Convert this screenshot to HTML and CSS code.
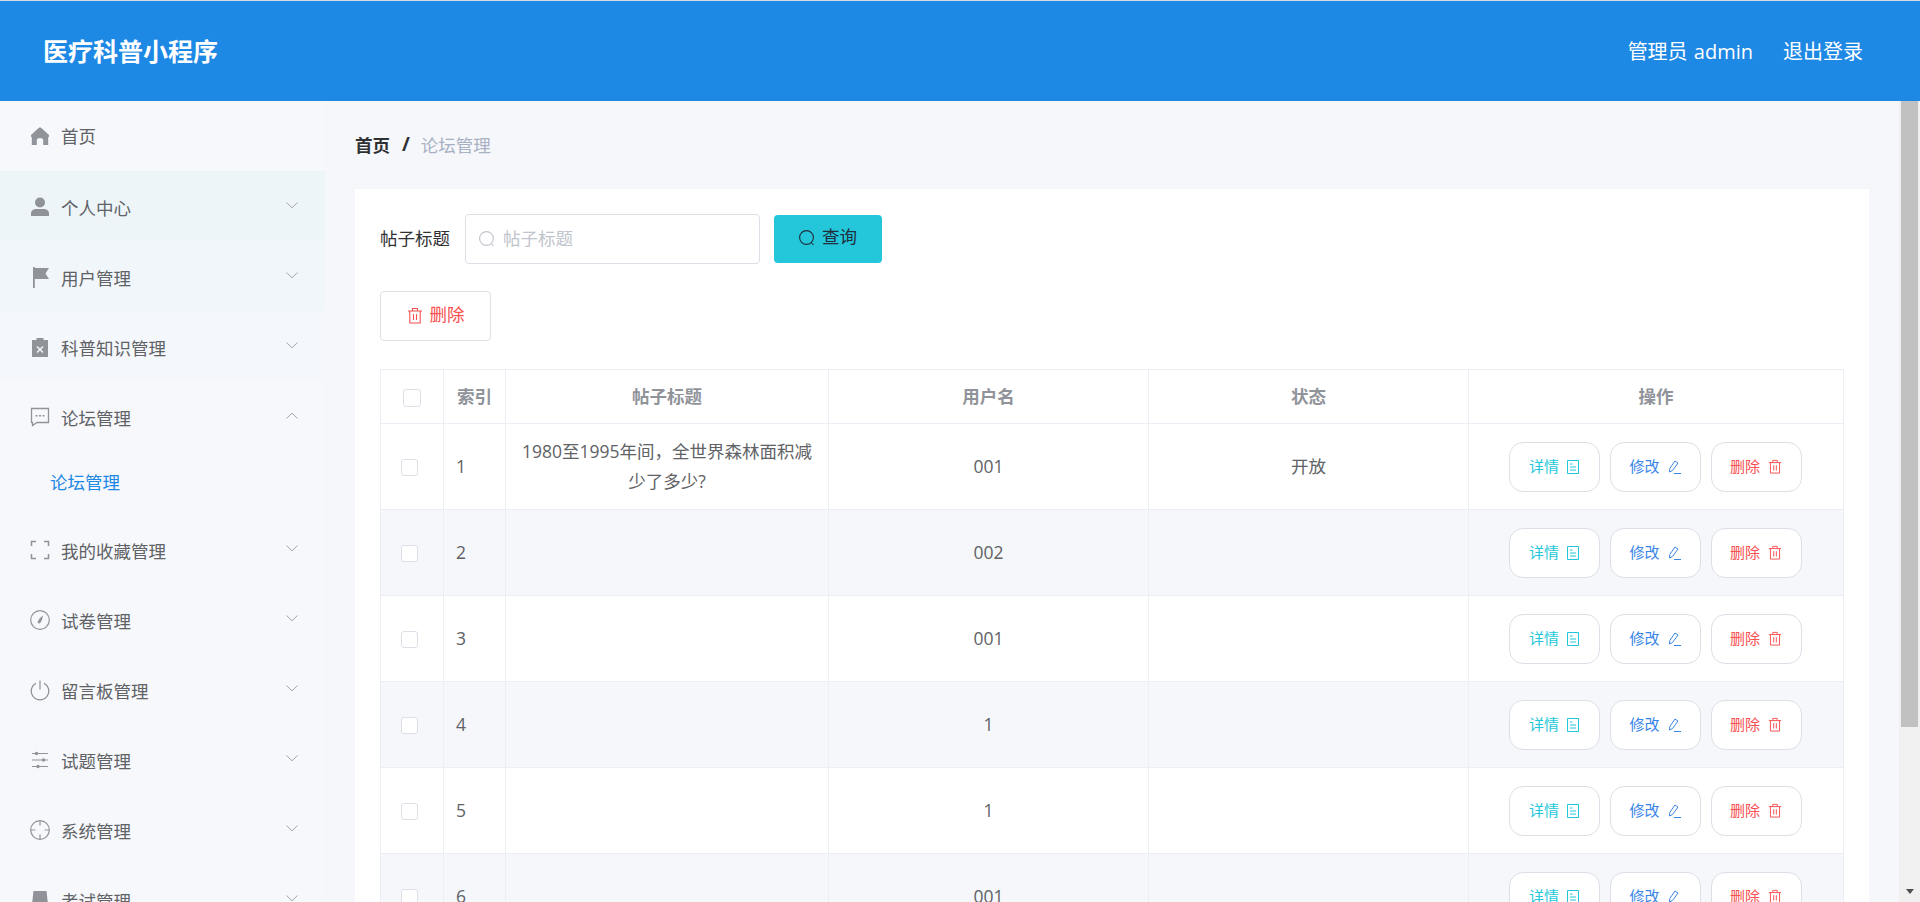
FILE: index.html
```html
<!DOCTYPE html>
<html lang="zh-CN">
  <head>
    <meta charset="UTF-8" />
    <title>医疗科普小程序</title>
    <link rel="stylesheet" href="styles.css">
  </head>
  <body>
    <svg class="sprites" width="0" height="0">
      <symbol id="i-search" viewBox="0 0 16 16"><circle cx="7.5" cy="7.5" r="6.9" fill="none" stroke="currentColor" stroke-width="1.1"/><path d="M12.300 12.500l2.200 2.500" fill="none" stroke="currentColor" stroke-width="1.1"/></symbol>
      <symbol id="i-trash" viewBox="0 0 16 16"><path d="M1 3.500h14M5.500 3.500V1h5v2.500M2.800 3.500v12h10.400v-12M6.500 6.500v6M9.500 6.500v6" fill="none" stroke="currentColor" stroke-width="1.1"/></symbol>
      <symbol id="i-doc" viewBox="0 0 12 14"><path d="M.5.500h11v13H.5zM3 4h2.500M3 7h6M3 10h6" fill="none" stroke="currentColor" stroke-width="1"/></symbol>
      <symbol id="i-edit" viewBox="0 0 13 14"><path d="M7 1l3 2-5.500 7.500-3 1.500.3-3.500zM6 13.500h7" fill="none" stroke="currentColor" stroke-width="1"/></symbol>
      <symbol id="i-chev" viewBox="0 0 12 7"><path d="M.5.500L6 5.800 11.500.5" fill="none" stroke="currentColor" stroke-width="1"/></symbol>
    </svg>

    <header class="topbar">
      <div class="brand">医疗科普小程序</div>
      <div class="topbar-right">
        <span class="user-name">管理员 admin</span>
        <span>退出登录</span>
      </div>
    </header>

    <div class="layout">
      <nav class="sidebar">
        <div class="menu-item no-arrow">
          <svg class="menu-icon" viewBox="0 0 20 20"><path d="M10 1.500c-1 0-1.500.7-2.200 1.300L1 9v1.500c0 .5.300.8.800.8V19h5v-5c0-1 1-2 3.200-2s3.200 1 3.200 2v5h5v-7.700c.5 0 .8-.3.8-.8V9l-6.800-6.200c-.7-.6-1.200-1.300-2.200-1.300z" fill="currentColor"/></svg>
          <span class="menu-text">首页</span>
        </div>
        <div class="menu-item hover-a">
          <svg class="menu-icon" viewBox="0 0 20 20"><circle cx="10" cy="5.500" r="5" fill="currentColor"/><path d="M1 19v-2.500c0-3 2.500-4.500 5-4.500h8c2.500 0 5 1.500 5 4.500V19z" fill="currentColor"/></svg>
          <span class="menu-text">个人中心</span>
          <svg class="chev"><use href="#i-chev"/></svg>
        </div>
        <div class="menu-item hover-b">
          <svg class="menu-icon" viewBox="0 0 20 20"><path d="M3 0h1.800v21H3zM4.800 1H19l-3.500 5.500L19 12H4.800z" fill="currentColor"/></svg>
          <span class="menu-text">用户管理</span>
          <svg class="chev"><use href="#i-chev"/></svg>
        </div>
        <div class="menu-item hover-c">
          <svg class="menu-icon" viewBox="0 0 20 20"><path fill-rule="evenodd" d="M2 3h4.500V1h7v2H18v17H2zM7.500 9l-1 1 2.500 2.500L6.500 15l1 1 2.500-2.500 2.500 2.500 1-1-2.500-2.500 2.500-2.500-1-1-2.500 2.500z" fill="currentColor"/></svg>
          <span class="menu-text">科普知识管理</span>
          <svg class="chev"><use href="#i-chev"/></svg>
        </div>
        <div class="menu-item">
          <svg class="menu-icon" viewBox="0 0 20 20"><path d="M1.500 1.500h17v14H7L2.500 18.500v-3h-1z" fill="none" stroke="currentColor" stroke-width="1.300"/><path d="M5.500 8h2v1.600h-2zM9 8h2v1.600H9zM12.500 8h2v1.600h-2z" fill="currentColor"/></svg>
          <span class="menu-text">论坛管理</span>
          <svg class="chev open"><use href="#i-chev"/></svg>
        </div>
        <div class="submenu-item">论坛管理</div>
        <div class="menu-item">
          <svg class="menu-icon" viewBox="0 0 20 20"><path d="M1.500 6V1.500H6M14 1.500h4.500V6M18.500 14v4.500H14M6 18.500H1.500V14" fill="none" stroke="currentColor" stroke-width="1.500"/></svg>
          <span class="menu-text">我的收藏管理</span>
          <svg class="chev"><use href="#i-chev"/></svg>
        </div>
        <div class="menu-item">
          <svg class="menu-icon" viewBox="0 0 20 20"><circle cx="10" cy="10" r="9.300" fill="none" stroke="currentColor" stroke-width="1.200"/><path d="M13 5.500c-.3 2.500-1.500 6-2.800 7.500-1 1-3 0-2.500-1.500.7-1.800 3.300-4.800 5.300-6z" fill="currentColor"/></svg>
          <span class="menu-text">试卷管理</span>
          <svg class="chev"><use href="#i-chev"/></svg>
        </div>
        <div class="menu-item">
          <svg class="menu-icon" viewBox="0 0 20 20"><path d="M6 3.200a8.800 8.800 0 1 0 8 0M10 .5v9" fill="none" stroke="currentColor" stroke-width="1.200"/></svg>
          <span class="menu-text">留言板管理</span>
          <svg class="chev"><use href="#i-chev"/></svg>
        </div>
        <div class="menu-item">
          <svg class="menu-icon" viewBox="0 0 20 20"><path d="M2 3.500h16M2 10h16M2 16.500h16" fill="none" stroke="currentColor" stroke-width="1"/><circle cx="6.500" cy="3.500" r="1.700" fill="currentColor"/><circle cx="13.500" cy="10" r="1.700" fill="currentColor"/><circle cx="8" cy="16.500" r="1.700" fill="currentColor"/></svg>
          <span class="menu-text">试题管理</span>
          <svg class="chev"><use href="#i-chev"/></svg>
        </div>
        <div class="menu-item">
          <svg class="menu-icon" viewBox="0 0 20 20"><circle cx="10" cy="10" r="9.300" fill="none" stroke="currentColor" stroke-width="1.200"/><path d="M10 .5v5M10 14.500v5M.5 10h5M14.500 10h5" stroke="currentColor" stroke-width="1.200"/></svg>
          <span class="menu-text">系统管理</span>
          <svg class="chev"><use href="#i-chev"/></svg>
        </div>
        <div class="menu-item">
          <svg class="menu-icon" viewBox="0 0 20 20"><path d="M3.500 1h13l2 18h-17z" fill="currentColor"/></svg>
          <span class="menu-text">考试管理</span>
          <svg class="chev"><use href="#i-chev"/></svg>
        </div>
      </nav>

      <main class="content">
        <div class="breadcrumb">
          <b>首页</b><i>/</i><span>论坛管理</span>
        </div>

        <section class="panel">
          <div class="search-row">
            <label class="search-label">帖子标题</label>
            <div class="search-input">
              <svg class="search-icon"><use href="#i-search"/></svg>
              <span>帖子标题</span>
            </div>
            <button class="search-btn" type="button"><svg><use href="#i-search"/></svg><span>查询</span></button>
          </div>

          <button class="del-btn" type="button"><svg><use href="#i-trash"/></svg><span>删除</span></button>

          <table class="table">
            <colgroup>
              <col class="c-check"><col class="c-index"><col class="c-title"><col class="c-user"><col class="c-state"><col>
            </colgroup>
            <thead>
              <tr><th><span class="check"></span></th><th>索引</th><th>帖子标题</th><th>用户名</th><th>状态</th><th>操作</th></tr>
            </thead>
            <tbody id="rows"></tbody>
          </table>
        </section>
      </main>

      <div class="scrollbar">
        <span class="thumb"></span>
        <span class="track"></span>
        <span class="arrow-down"></span>
      </div>
    </div>

    <script>
      const data = [
        [1, '1980至1995年间，全世界森林面积减少了多少?', '001', '开放'],
        [2, '', '002', ''],
        [3, '', '001', ''],
        [4, '', '1', ''],
        [5, '', '1', ''],
        [6, '', '001', ''],
        [7, '', '001', '']
      ];
      const actions =
        '<div class="ops">' +
        '<button class="op op-info" type="button"><span>详情</span><svg class="ic-doc"><use href="#i-doc"/></svg></button>' +
        '<button class="op op-edit" type="button"><span>修改</span><svg class="ic-edit"><use href="#i-edit"/></svg></button>' +
        '<button class="op op-del" type="button"><span>删除</span><svg class="ic-trash"><use href="#i-trash"/></svg></button>' +
        '</div>';

      document.getElementById('rows').innerHTML = data.map(function (r) {
        return '<tr><td><span class="check"></span></td>' +
          '<td class="left">' + r[0] + '</td>' +
          '<td>' + r[1] + '</td><td>' + r[2] + '</td><td>' + r[3] + '</td>' +
          '<td>' + actions + '</td></tr>';
      }).join('');
    </script>
  </body>
</html>
```

FILE: styles.css
```css
* {
  box-sizing: border-box;
}
html, body {
  height: 100%;
  margin: 0;
  overflow: hidden;
}
body {
  font-family: "Open Sans", "Noto Sans CJK SC", sans-serif;
  font-size: 16px;
  color: #606266;
  display: flex;
  flex-direction: column;
  background: #f6f8fb;
}
.sprites {
  display: none;
}

.topbar {
  height: 101px;
  flex: none;
  display: flex;
  justify-content: space-between;
  align-items: center;
  padding: 0 57px 2px 43px;
  background: #1e88e5;
  border-top: 1px solid #d0dbe6;
  color: #fff;
}
.brand {
  font-size: 25px;
  font-weight: 700;
}
.topbar-right {
  display: flex;
  gap: 30px;
  font-size: 20px;
}
.user-name {
  word-spacing: 1px;
}

.layout {
  flex: 1;
  min-height: 0;
  display: flex;
}

.sidebar {
  width: 325px;
  flex: none;
  overflow: hidden;
}
.menu-item {
  height: 70px;
  display: flex;
  align-items: center;
  padding: 2px 27px 0 30px;
  color: #606266;
  font-size: 17.500px;
}
.menu-item.no-arrow {
  padding-top: 0;
}
.no-arrow .menu-text {
  padding-bottom: 2px;
}
.menu-item.hover-a {
  background: #edf5f9;
}
.menu-item.hover-b {
  background: #f1f6fa;
}
.menu-item.hover-c {
  background: #f4f7fb;
}
.menu-icon {
  width: 20px;
  height: 20px;
  margin-right: 11px;
  color: #909399;
  flex: none;
  overflow: visible;
}
.menu-text {
  flex: 1;
}
.chev {
  width: 12px;
  height: 7px;
  margin-top: -4px;
  color: #a3a6ad;
}
.chev.open {
  transform: rotate(180deg);
}
.submenu-item {
  height: 63px;
  padding: 0 0 3px 50px;
  display: flex;
  align-items: center;
  font-size: 17.500px;
  color: #1e88e5;
}

.content {
  flex: 1;
  min-width: 0;
  padding: 12px 30px 0 30px;
  overflow: hidden;
  background: #f6f7fa;
}
.breadcrumb {
  height: 60px;
  display: flex;
  align-items: center;
  padding-top: 2px;
  font-size: 17.500px;
  color: #a8b1c4;
}
.breadcrumb b {
  color: #303133;
}
.breadcrumb i {
  font-style: normal;
  font-weight: 700;
  font-size: 19px;
  color: #303133;
  margin: 0 11px 0 12px;
}

.panel {
  margin-top: 16px;
  background: #fff;
  padding: 25px 25px 0;
  height: 800px;
}
.search-row {
  display: flex;
  align-items: center;
  height: 50px;
}
.search-label {
  width: 85px;
  padding-bottom: 4px;
  font-size: 17.500px;
  color: #303133;
}
.search-input {
  width: 295px;
  height: 50px;
  border: 1px solid #dcdfe6;
  border-radius: 4px;
  display: flex;
  align-items: center;
  padding-left: 13px;
  color: #c0c4cc;
  font-size: 17.500px;
}
.search-input span {
  padding-bottom: 4px;
}
.search-icon {
  width: 16px;
  height: 16px;
  margin-right: 8px;
}
.search-btn {
  margin-left: 14px;
  width: 108px;
  height: 48px;
  border: 0;
  border-radius: 4px;
  background: #23c7d9;
  color: #1f2d3d;
  font: inherit;
  font-size: 17.500px;
  display: flex;
  align-items: center;
  justify-content: center;
  gap: 7px;
}
.search-btn span {
  padding-bottom: 7px;
}
.search-btn svg {
  width: 16px;
  height: 16px;
  margin-bottom: 2px;
}
.del-btn {
  margin-top: 27px;
  width: 111px;
  height: 50px;
  background: #fff;
  border: 1px solid #dcdfe6;
  border-radius: 4px;
  color: #f95050;
  font: inherit;
  font-size: 17.500px;
  display: flex;
  align-items: center;
  justify-content: center;
  gap: 7px;
}
.del-btn span {
  padding-bottom: 5px;
}
.del-btn svg {
  width: 16px;
  height: 17px;
  margin-bottom: 2px;
}

.table {
  margin-top: 28px;
  width: 100%;
  table-layout: fixed;
  border-collapse: collapse;
  font-size: 17.500px;
}
.c-check { width: 63px; }
.c-index { width: 62px; }
.c-title { width: 323px; }
.c-user { width: 320px; }
.c-state { width: 320px; }
.table th, .table td {
  border: 1px solid #ebeef5;
  text-align: center;
  padding: 0 12px 2px;
}
.table th {
  height: 54px;
  color: #909399;
  font-weight: 700;
}
.table td {
  height: 86px;
  line-height: 30px;
}
.table td.left {
  text-align: left;
}
.table tbody tr:nth-child(even) td {
  background: #f5f7fa;
}
.check {
  display: inline-block;
  width: 18px;
  height: 18px;
  border: 1px solid #dcdfe6;
  border-radius: 3px;
  background: #fff;
  vertical-align: middle;
}
.table td .check {
  width: 17px;
  height: 17px;
  margin-left: -6px;
}
.ops {
  display: flex;
  justify-content: center;
  gap: 10px;
  margin: 0 0 -2px -2px;
}
.op {
  width: 91px;
  height: 50px;
  background: #fff;
  border: 1px solid #dcdfe6;
  border-radius: 14px;
  font: inherit;
  font-size: 15px;
  display: flex;
  align-items: center;
  justify-content: center;
  gap: 8px;
}
.op span {
  padding-bottom: 2px;
}
.ic-doc {
  width: 12px;
  height: 14px;
}
.ic-edit {
  width: 13px;
  height: 14px;
}
.ic-trash {
  width: 14px;
  height: 15px;
}
.op-info { color: #23c7d9; }
.op-edit { color: #3a86e8; }
.op-del { color: #f95050; }

.scrollbar {
  width: 21px;
  flex: none;
  display: flex;
  flex-direction: column;
  align-items: center;
  background: #f0f0f0;
}
.thumb {
  width: 17px;
  height: 626px;
  background: #c1c1c1;
}
.track {
  flex: 1;
}
.arrow-down {
  margin-bottom: 8px;
  border-left: 4.500px solid transparent;
  border-right: 4.500px solid transparent;
  border-top: 5px solid #505050;
}
```
